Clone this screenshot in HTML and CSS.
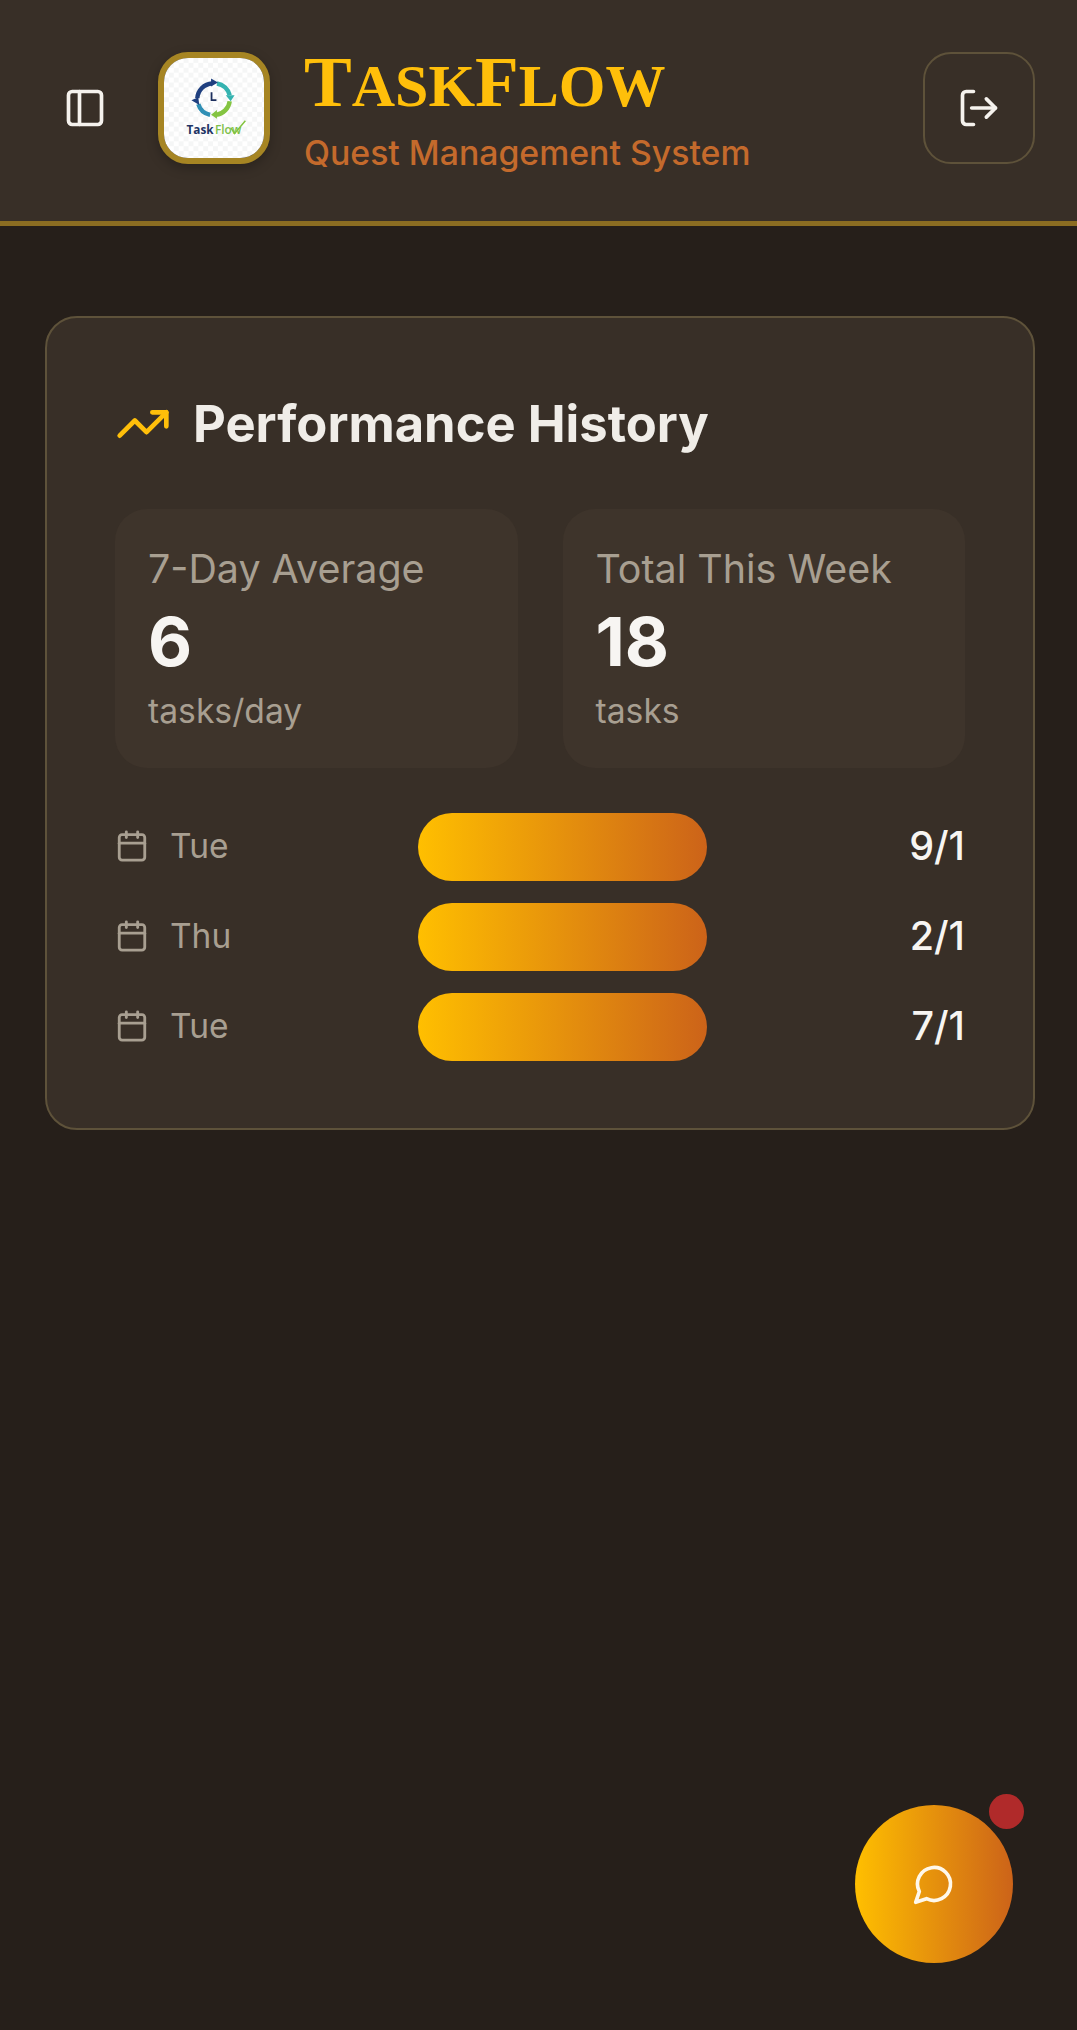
FILE: index.html
```html
<!DOCTYPE html>
<html lang="en">
<head>
    <meta charset="UTF-8">
    <title>TaskFlow</title>
    <meta name="viewport" content="width=device-width, initial-scale=1.0">
    <link rel="stylesheet" href="styles.css">
</head>
<body>
    <!-- Top bar -->
    <header class="topbar">
        <button class="menu-btn" type="button" aria-label="Toggle sidebar">
            <svg class="icon-36" viewBox="0 0 24 24" fill="none" stroke="currentColor" stroke-width="2" stroke-linecap="round" stroke-linejoin="round">
                <rect x="3" y="3" width="18" height="18" rx="2"></rect>
                <path d="M9 3v18"></path>
            </svg>
        </button>
        <div class="logo">
            <svg class="logo-art" viewBox="0 0 102 102">
                <defs>
                    <pattern id="checks" width="10" height="10" patternUnits="userSpaceOnUse">
                        <rect width="10" height="10" fill="#ffffff"></rect>
                        <rect width="5" height="5" fill="#f5f6f6"></rect>
                        <rect x="5" y="5" width="5" height="5" fill="#f5f6f6"></rect>
                    </pattern>
                </defs>
                <rect width="102" height="102" fill="url(#checks)"></rect>
                <g transform="translate(0 2)">
                    <g fill="none" stroke-width="4.500">
                        <path d="M34 39A16 16 0 0 1 49 24" stroke="#1f3f7f"></path>
                        <path d="M54 24A16 16 0 0 1 67 36" stroke="#35b3b0"></path>
                        <path d="M67 42A16 16 0 0 1 53 56" stroke="#84c441"></path>
                        <path d="M47 56A16 16 0 0 1 35 45" stroke="#2f8fb5"></path>
                    </g>
                    <path d="M48 19l7 4-7 4z" fill="#1f3f7f"></path>
                    <path d="M63 36h9l-4 6z" fill="#35b3b0"></path>
                    <path d="M54 51v9l-6-4z" fill="#84c441"></path>
                    <path d="M36 46l-8-5 7-3z" fill="#1f3f7f"></path>
                    <path d="M48.500 33v8h5" fill="none" stroke="#1c2f5e" stroke-width="1.800"></path>
                </g>
                <text class="logo-task" x="23" y="78">Task</text>
                <text class="logo-flow" x="52" y="78">Flow</text>
                <path d="M68 71l4 6 11-13" fill="none" stroke="#84c441" stroke-width="1.500"></path>
            </svg>
        </div>
        <div class="brand">
            <h1 class="brand-name"><span class="brand-cap">T</span>ask<span class="brand-cap">F</span>low</h1>
            <p class="brand-sub">Quest Management System</p>
        </div>
        <button class="logout-btn" type="button" aria-label="Log out">
            <svg class="icon-36" viewBox="0 0 24 24" fill="none" stroke="currentColor" stroke-width="2" stroke-linecap="round" stroke-linejoin="round">
                <path d="M9 21H5a2 2 0 0 1-2-2V5a2 2 0 0 1 2-2h4"></path>
                <path d="M8 12h13"></path>
                <path d="M16 7l5 5-5 5"></path>
            </svg>
        </button>
    </header>

    <main class="content">
        <!-- Performance card -->
        <section class="card">
            <h2 class="card-title">
                <svg class="trend-icon" viewBox="0 0 24 24" fill="none" stroke="currentColor" stroke-width="2" stroke-linecap="round" stroke-linejoin="round">
                    <path d="M22 7l-8.500 8.500-5-5L2 17"></path>
                    <path d="M16 7h6v6"></path>
                </svg>
                Performance History
            </h2>

            <div class="stats">
                <div class="stat">
                    <div class="stat-label">7-Day Average</div>
                    <div class="stat-value">6</div>
                    <div class="stat-unit">tasks/day</div>
                </div>
                <div class="stat">
                    <div class="stat-label">Total This Week</div>
                    <div class="stat-value">18</div>
                    <div class="stat-unit">tasks</div>
                </div>
            </div>

            <ul class="history">
                <li class="history-row">
                    <span class="day">
                        <svg class="cal-icon" viewBox="0 0 24 24" fill="none" stroke="currentColor" stroke-width="2" stroke-linecap="round" stroke-linejoin="round"><path d="M8 2v4"></path><path d="M16 2v4"></path><rect x="3" y="4" width="18" height="18" rx="2"></rect><path d="M3 10h18"></path></svg>
                        Tue
                    </span>
                    <span class="bar"></span>
                    <span class="date">9/1</span>
                </li>
                <li class="history-row">
                    <span class="day">
                        <svg class="cal-icon" viewBox="0 0 24 24" fill="none" stroke="currentColor" stroke-width="2" stroke-linecap="round" stroke-linejoin="round"><path d="M8 2v4"></path><path d="M16 2v4"></path><rect x="3" y="4" width="18" height="18" rx="2"></rect><path d="M3 10h18"></path></svg>
                        Thu
                    </span>
                    <span class="bar"></span>
                    <span class="date">2/1</span>
                </li>
                <li class="history-row">
                    <span class="day">
                        <svg class="cal-icon" viewBox="0 0 24 24" fill="none" stroke="currentColor" stroke-width="2" stroke-linecap="round" stroke-linejoin="round"><path d="M8 2v4"></path><path d="M16 2v4"></path><rect x="3" y="4" width="18" height="18" rx="2"></rect><path d="M3 10h18"></path></svg>
                        Tue
                    </span>
                    <span class="bar"></span>
                    <span class="date">7/1</span>
                </li>
            </ul>
        </section>
    </main>

    <!-- Floating chat button -->
    <button class="chat-btn" type="button" aria-label="Open chat">
        <svg class="chat-icon" viewBox="0 0 24 24" fill="none" stroke="currentColor" stroke-width="2" stroke-linecap="round" stroke-linejoin="round">
            <path d="M7.900 20A9 9 0 1 0 4 16.100L2 22z"></path>
        </svg>
        <span class="chat-badge"></span>
    </button>
</body>
</html>
```

FILE: styles.css
```css
* {
    margin: 0;
    padding: 0;
    box-sizing: border-box;
}

body {
    min-height: 2030px;
    background-color: #261f1a;
    color: #f5f2ed;
    font-family: "Inter", "Liberation Sans", sans-serif;
}

button {
    background: none;
    border: none;
    color: inherit;
    font: inherit;
    cursor: pointer;
}

/* Top bar */
.topbar {
    display: flex;
    align-items: center;
    height: 226px;
    padding: 52px 42px 57px 46px;
    background-color: #382f27;
    border-bottom: 5px solid #8b6d22;
}

.menu-btn {
    display: flex;
    align-items: center;
    justify-content: center;
    width: 78px;
    height: 78px;
    margin-right: 34px;
}

.icon-36 {
    display: block;
    width: 44px;
    height: 44px;
}

.logo {
    flex: none;
    width: 112px;
    height: 112px;
    margin-right: 34px;
    border: 6px solid #a68523;
    border-radius: 30px;
    overflow: hidden;
    box-shadow: 0 4px 12px rgba(0, 0, 0, 0.25);
}

.logo-art {
    display: block;
    width: 100px;
    height: 100px;
}

.logo-task,
.logo-flow {
    font-family: "Open Sans", sans-serif;
    font-size: 12px;
    font-weight: 700;
    fill: #1f3565;
}

.logo-flow {
    font-weight: 600;
    fill: #7cc04a;
}

.brand {
    flex: 1;
    margin-top: 6px;
}

.brand-name {
    font-family: "Liberation Serif", serif;
    font-size: 60px;
    font-weight: 700;
    line-height: 66px;
    text-transform: uppercase;
    color: #ffbf0a;
}

.brand-cap {
    font-size: 71.5px;
}

.brand-sub {
    margin-top: 14px;
    font-size: 33.8px;
    font-weight: 500;
    line-height: 40px;
    color: #c46a2c;
}

.logout-btn {
    display: flex;
    align-items: center;
    justify-content: center;
    flex: none;
    width: 112px;
    height: 112px;
    border: 2px solid #5e523a;
    border-radius: 28px;
}

/* Main content */
.content {
    padding: 90px 42px 0 45px;
}

.card {
    height: 814px;
    padding: 77px 68px 0;
    background-color: #382f27;
    border: 2px solid #5e523a;
    border-radius: 32px;
}

.card-title {
    display: flex;
    align-items: center;
    gap: 22px;
    font-size: 50.7px;
    font-weight: 700;
    line-height: 58px;
    color: #f0ede8;
}

.trend-icon {
    flex: none;
    width: 56px;
    height: 56px;
    color: #ffbf0a;
}

.stats {
    display: grid;
    grid-template-columns: 1fr 1fr;
    gap: 45px;
    margin-top: 56px;
}

.stat {
    height: 259px;
    padding: 38px 33px 0;
    background-color: #3e342b;
    border-radius: 32px;
}

.stat-label {
    font-size: 39.4px;
    line-height: 44px;
    color: #a89f91;
}

.stat-value {
    margin-top: 10px;
    font-size: 68px;
    font-weight: 700;
    line-height: 80px;
    color: #f7f5f2;
}

.stat-unit {
    margin-top: 10px;
    font-size: 33.7px;
    line-height: 40px;
    color: #a89f91;
}

/* Daily rows */
.history {
    display: flex;
    flex-direction: column;
    gap: 22px;
    margin-top: 45px;
    list-style: none;
}

.history-row {
    display: flex;
    align-items: center;
    height: 68px;
}

.day {
    display: flex;
    align-items: center;
    gap: 21px;
    flex: none;
    width: 303px;
    margin-bottom: 2px;
    font-size: 33.5px;
    color: #a89f91;
}

.cal-icon {
    flex: none;
    width: 34px;
    height: 34px;
}

.bar {
    flex: none;
    width: 289px;
    height: 68px;
    border-radius: 34px;
    background: linear-gradient(90deg, #ffbf00, #cc6319);
}

.date {
    flex: 1;
    margin-bottom: 2px;
    font-size: 39.5px;
    font-weight: 500;
    text-align: right;
    color: #f7f5f2;
}

/* Chat button */
.chat-btn {
    position: fixed;
    left: 855px;
    top: 1805px;
    display: flex;
    align-items: center;
    justify-content: center;
    width: 158px;
    height: 158px;
    border-radius: 50%;
    background: linear-gradient(90deg, #ffbf00, #cc6319);
    color: #fff8ea;
}

.chat-icon {
    display: block;
    width: 44px;
    height: 44px;
}

.chat-badge {
    position: absolute;
    top: -11px;
    right: -11px;
    width: 35px;
    height: 35px;
    border-radius: 50%;
    background-color: #b02a2a;
}
```
